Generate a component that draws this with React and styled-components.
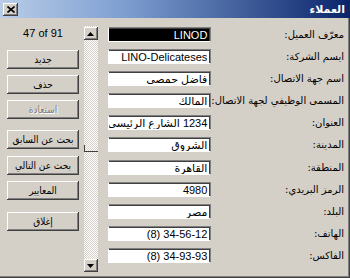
import React from "react";
import styled, { createGlobalStyle } from "styled-components";

const GlobalStyle = createGlobalStyle`
  html, body {
    margin: 0;
    padding: 0;
    background: #d4d0c8;
  }
  body {
    font-family: "Liberation Sans", "DejaVu Sans", sans-serif;
    font-size: 11px;
    color: #000;
  }
`;

const Window = styled.div`
  width: 350px;
  height: 278px;
  box-sizing: border-box;
  background: #d4d0c8;
  display: flex;
  flex-direction: column;
  box-shadow: inset -1px -1px #404040, inset -2px -2px #808080;
`;

const TitleBar = styled.div`
  height: 18px;
  flex: none;
  display: flex;
  align-items: center;
  justify-content: space-between;
  padding: 0 5px 0 3px;
  background: linear-gradient(90deg, #b9cde8 0%, #7f9fd2 35%, #0a246a 100%);
`;

const CloseButton = styled.div`
  width: 15px;
  height: 13px;
  display: flex;
  align-items: center;
  justify-content: center;
  background: #d4d0c8;
  box-shadow: inset -1px -1px #404040, inset 1px 1px #fff, inset -2px -2px #808080;
`;

const Title = styled.div`
  color: #fff;
  font-weight: bold;
  font-family: "DejaVu Sans", sans-serif;
  font-size: 11px;
`;

const Body = styled.div`
  flex: 1;
  display: flex;
  flex-direction: row;
`;

const LeftPanel = styled.div`
  width: 83px;
  padding: 8px 0 0 7px;
  display: flex;
  flex-direction: column;
`;

const Counter = styled.div`
  width: 72px;
  height: 14px;
  line-height: 14px;
  text-align: center;
  font-size: 11px;
`;

const Button = styled.div`
  width: 72px;
  height: 19px;
  margin-top: ${(p) => p.$top}px;
  display: flex;
  align-items: center;
  justify-content: center;
  box-sizing: border-box;
  background: #d4d0c8;
  font-family: "DejaVu Sans Condensed", "DejaVu Sans", sans-serif;
  font-size: 10px;
  color: ${(p) => (p.$disabled ? "#808080" : "#000")};
  text-shadow: ${(p) => (p.$disabled ? "1px 1px #fff" : "none")};
  box-shadow: inset -1px -1px #404040, inset 1px 1px #fff, inset -2px -2px #808080;
`;

const ScrollTrack = styled.div`
  width: 16px;
  margin: 8px 0 6px 0;
  display: flex;
  flex-direction: column;
  align-items: center;
  background-color: #d4d0c8;
  background-image: conic-gradient(#fff 25%, transparent 0 50%, #fff 0 75%, transparent 0);
  background-size: 2px 2px;
`;

const ArrowButton = styled.div`
  width: 14px;
  height: 13px;
  margin-top: ${(p) => p.$top || 0}px;
  display: flex;
  align-items: center;
  justify-content: center;
  background: #d4d0c8;
  box-shadow: inset -1px -1px #404040, inset 1px 1px #fff, inset -2px -2px #808080;
`;

const Thumb = styled.div`
  width: 14px;
  height: 7px;
  margin-top: 105px;
  box-sizing: border-box;
  border-left: 1px solid #404040;
  border-bottom: 1px solid #404040;
`;

const Spacer = styled.div`
  flex: 1;
`;

const Form = styled.div`
  flex: 1;
  margin: 9px 0 0 10px;
  display: grid;
  grid-template-columns: 103px 1fr;
  grid-auto-rows: 22.1px;
`;

const Field = styled.div`
  height: 15px;
  box-sizing: border-box;
  background: ${(p) => (p.$selected ? "#000" : "#fff")};
  color: ${(p) => (p.$selected ? "#fff" : "#000")};
  border-top: 1px solid #808080;
  border-right: 1px solid #808080;
  border-left: 1px solid #fff;
  border-bottom: 1px solid #fff;
  box-shadow: inset 0 1px #404040, inset -1px 0 #404040;
  padding: 1px 3px 0 3px;
  line-height: 12px;
  font-size: 11px;
  text-align: right;
  white-space: nowrap;
  overflow: hidden;
  direction: rtl;
`;

const Label = styled.div`
  height: 15px;
  line-height: 15px;
  direction: rtl;
  text-align: right;
  padding-right: 6px;
  font-family: "DejaVu Sans", sans-serif;
  font-size: 10px;
  white-space: nowrap;
`;

const rows = [
  ["معرّف العميل:", "LINOD", true],
  ["ايسم الشركة:", "LINO-Delicateses"],
  ["اسم جهة الاتصال:", "فاضل حمصي"],
  ["المسمى الوظيفي لجهة الاتصال:", "المالك"],
  ["العنوان:", "1234 الشارع الرئيسي"],
  ["المدينة:", "الشروق"],
  ["المنطقة:", "القاهرة"],
  ["الرمز البريدي:", "4980"],
  ["البلد:", "مصر"],
  ["الهاتف:", "(8) 34-56-12", false, true],
  ["الفاكس:", "(8) 34-93-93", false, true],
];

const buttons = [
  ["جديد", 10],
  ["حذف", 6],
  ["استعادة", 6, true],
  ["بحث عن السابق", 11],
  ["بحث عن التالي", 7],
  ["المعايير", 6],
  ["إغلاق", 12],
];

function Triangle({ down }) {
  return (
    <svg width="7" height="4" viewBox="0 0 7 4">
      <polygon points={down ? "0,0 7,0 3.5,4" : "0,4 7,4 3.5,0"} fill="#000" />
    </svg>
  );
}

export default function App() {
  return (
    <>
      <GlobalStyle />
      <Window>
        <TitleBar>
          <CloseButton>
            <svg width="8" height="7" viewBox="0 0 8 7">
              <path d="M0.5 0.5 L7.5 6.5 M7.5 0.5 L0.5 6.5" stroke="#000" strokeWidth="1.6" />
            </svg>
          </CloseButton>
          <Title dir="rtl">العملاء</Title>
        </TitleBar>
        <Body>
          <LeftPanel>
            <Counter>47 of 91</Counter>
            {buttons.map(([text, top, disabled]) => (
              <Button key={text} $top={top} $disabled={disabled} dir="rtl">
                {text}
              </Button>
            ))}
          </LeftPanel>
          <ScrollTrack>
            <ArrowButton $top={1}>
              <Triangle />
            </ArrowButton>
            <Thumb />
            <Spacer />
            <ArrowButton>
              <Triangle down />
            </ArrowButton>
          </ScrollTrack>
          <Form>
            {rows.map(([label, value, selected, ltr]) => (
              <React.Fragment key={label}>
                <Field $selected={selected}>
                  {ltr ? <bdo dir="ltr">{value}</bdo> : value}
                </Field>
                <Label>{label}</Label>
              </React.Fragment>
            ))}
          </Form>
        </Body>
      </Window>
    </>
  );
}
